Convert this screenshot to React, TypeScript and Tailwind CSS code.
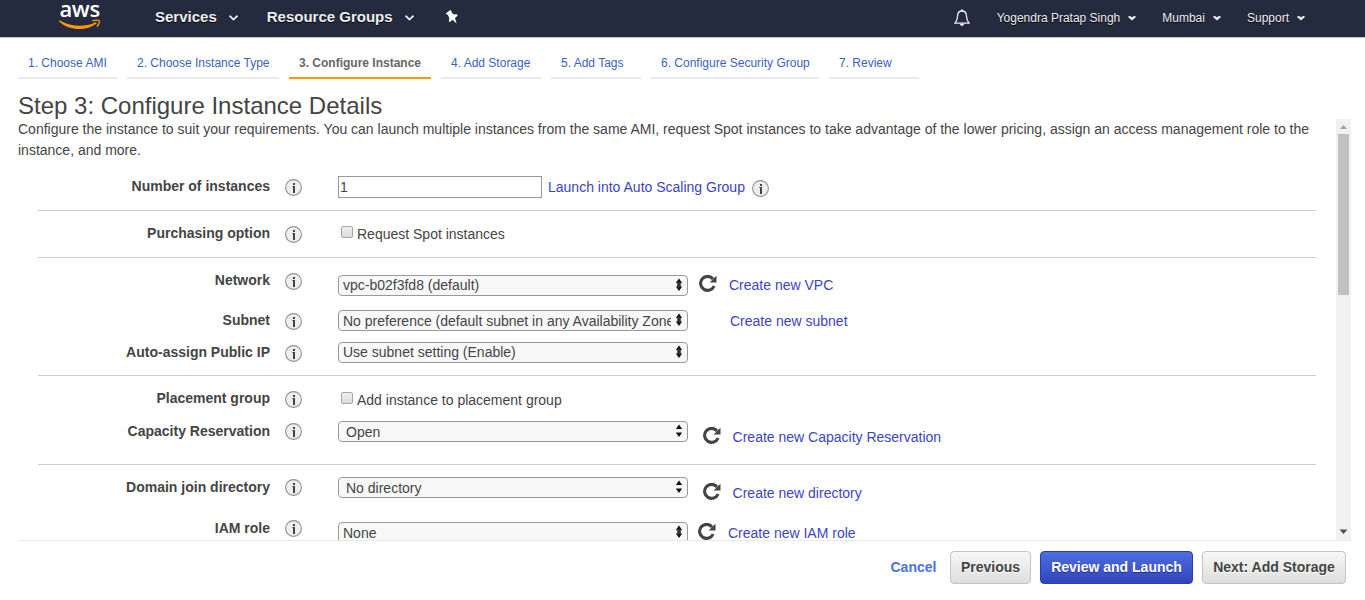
import React from "react";

type Tab = { label: string; width: string; active?: boolean };

const tabs: Tab[] = [
  { label: "1. Choose AMI", width: "w-[99px]" },
  { label: "2. Choose Instance Type", width: "w-[152px]" },
  { label: "3. Configure Instance", width: "w-[142px]", active: true },
  { label: "4. Add Storage", width: "w-[100px]" },
  { label: "5. Add Tags", width: "w-[90px]" },
  { label: "6. Configure Security Group", width: "w-[168px]" },
  { label: "7. Review", width: "w-[90px]" },
];

function Caret({ className = "" }: { className?: string }) {
  return (
    <svg viewBox="0 0 9 6" className={`h-1.5 w-[9px] ${className}`}>
      <path d="M0.5 0.7 L4.5 4.6 L8.5 0.7" fill="none" stroke="#eee" strokeWidth="1.8" />
    </svg>
  );
}

function SolidCaret({ className = "" }: { className?: string }) {
  return (
    <svg viewBox="0 0 8 5" className={`mt-px h-[5px] w-2 ${className}`}>
      <path d="M0.3 0.2 L2 0 L4 1.3 L6 0 L7.7 0.2 V1.2 L4 4.6 L0.3 1.2 Z" fill="#eee" />
    </svg>
  );
}

function AwsLogo() {
  return (
    <div className="ml-[58px] flex h-[37px] w-[44px] flex-col">
      <span className="block h-4 pl-[1.5px] font-['Open_Sans',sans-serif] text-[22px] leading-4 font-semibold tracking-[-0.4px] text-white [text-shadow:none]">
        aws
      </span>
      <svg viewBox="0 0 44 12" className="mt-0.5 h-3 w-[44px]">
        <path d="M1 2.8 C1.3 2.3 1.8 2.3 2.4 2.7 C13 9 27 9.2 37.2 4.5 C38.4 4 39.2 5 38.2 5.8 C28 13.5 11 12.6 1.4 3.7 Z" fill="#ff9900" />
        <path d="M34.4 2.9 C37 1.7 40.4 1.9 41.2 2.6 C41.9 3.4 40.9 6.8 38.8 8.6" fill="none" stroke="#ff9900" strokeWidth="1.3" />
      </svg>
    </div>
  );
}

function InfoIcon({ className = "" }: { className?: string }) {
  return (
    <svg viewBox="0 0 17 17" className={`size-[17px] shrink-0 ${className}`}>
      <circle cx="8.5" cy="8.5" r="7.9" fill="#eee" stroke="#929292" strokeWidth="1.1" />
      <rect x="8" y="4" width="2" height="2" fill="#444" />
      <rect x="8" y="7" width="2" height="7" fill="#444" />
      <rect x="7" y="7" width="1" height="1" fill="#888" />
    </svg>
  );
}

function Refresh({ className = "" }: { className?: string }) {
  return (
    <svg viewBox="0 0 18 18" className={`size-[18px] shrink-0 ${className}`}>
      <path d="M14 3.9 A7 7 0 1 0 15.1 11" fill="none" stroke="#444" strokeWidth="3.1" />
      <path d="M17.5 0.8 V7.6 H10.6 Z" fill="#444" />
    </svg>
  );
}

function Select({
  children,
  className = "",
  textClass = "pl-1",
  joined = true,
}: {
  children: string;
  className?: string;
  textClass?: string;
  joined?: boolean;
}) {
  return (
    <div
      className={`flex h-[21px] w-[350px] shrink-0 items-start rounded-[4px] border border-[#999] bg-[#f8f8f8] ${className}`}
    >
      <span className={`w-[332px] overflow-hidden leading-[19px] whitespace-nowrap ${textClass}`}>{children}</span>
      <svg viewBox="0 0 8 14" className="mt-[1.5px] ml-1 h-3.5 w-2">
        <path d="M0.8 5 L4 0.5 L7.2 5 Z M0.8 8.6 L4 13.1 L7.2 8.6 Z" fill="#111" />
        {joined && <path d="M2.2 4 H5.8 V9.5 H2.2 Z" fill="#333" />}
      </svg>
    </div>
  );
}

function Link({ children, className = "" }: { children: string; className?: string }) {
  return (
    <a href="#" className={`leading-5 whitespace-nowrap text-[#3b44c4] ${className}`}>
      {children}
    </a>
  );
}

function Check({ children, className = "" }: { children: string; className?: string }) {
  return (
    <label className={`flex items-start ${className}`}>
      <span className="mt-[3px] ml-[3px] size-3 rounded-[2px] border border-[#a5a5a5] bg-linear-to-b from-[#eee] to-[#dcdcdc]" />
      <span className="mt-px ml-1 leading-5">{children}</span>
    </label>
  );
}

function Row({
  label,
  height,
  icon = "mt-[3px]",
  children,
}: {
  label: string;
  height: string;
  icon?: string;
  children: React.ReactNode;
}) {
  return (
    <div className={`flex items-start ${height}`}>
      <span className="w-[232px] shrink-0 text-right leading-5 font-bold">{label}</span>
      <InfoIcon className={`mr-9 ml-[15px] ${icon}`} />
      {children}
    </div>
  );
}

function Group({ children }: { children: React.ReactNode }) {
  return <section className="ml-5 w-[1278px] border-b border-[#ccc] pt-3">{children}</section>;
}

const plainButton =
  "h-[33px] rounded-[4px] border border-[#c4c4c4] bg-linear-to-b from-[#f7f7f7] to-[#dedede] text-[#444] [text-shadow:0_1px_0_#fff]";

export default function App() {
  return (
    <div className="flex h-[600px] w-[1365px] flex-col overflow-hidden bg-white font-['Liberation_Sans',Arial,sans-serif] text-[14px] text-[#444]">
      <header className="flex h-[38px] shrink-0 items-start border-b border-[#c0c2c6] bg-[#252b3f] text-[#eee] [text-shadow:0_1px_0_#000]">
        <AwsLogo />
        <nav className="flex h-[34px] items-center text-[15px] font-bold">
          <span className="ml-[53px]">Services</span>
          <Caret className="mt-0.5 ml-[12px]" />
          <span className="ml-[29px]">Resource Groups</span>
          <Caret className="mt-0.5 ml-[12px]" />
          <svg viewBox="0 0 14 16" className="ml-[31px] h-4 w-3.5">
            <path
              d="M1 4.2 L5.4 1 L6.6 2.2 L6.4 3.2 L9 5.4 L11.6 5.2 L12.8 6.5 L10 9 L11.6 14.6 L7.6 10.7 L4.6 13.3 L3.8 11.8 L4.3 9.1 L2.8 5.8 L1.6 5.6 Z"
              fill="#fff"
            />
          </svg>
        </nav>
        <div className="ml-auto flex h-[35px] items-center text-[12px]">
          <svg viewBox="0 0 16 18" className="mr-[27px] h-[18px] w-4">
            <path
              d="M8 2 C5 2 3.7 4.2 3.6 6.8 C3.5 10.4 3 12 0.9 14.2 H15.1 C13 12 12.5 10.4 12.4 6.8 C12.3 4.2 11 2 8 2 Z"
              fill="none"
              stroke="#eee"
              strokeWidth="1.3"
            />
            <path d="M7 0.6 H9 V2 H7 Z M5.9 14.8 H10.1 C10 17.6 6 17.6 5.9 14.8 Z" fill="#eee" />
          </svg>
          <span>Yogendra Pratap Singh</span>
          <SolidCaret className="ml-2" />
          <span className="ml-[26px]">Mumbai</span>
          <SolidCaret className="ml-2" />
          <span className="ml-[26px]">Support</span>
          <SolidCaret className="mr-[60px] ml-2" />
        </div>
      </header>

      <nav className="ml-[18px] flex h-[41px] shrink-0 gap-2.5 text-[12px]">
        {tabs.map((tab) => (
          <a
            key={tab.label}
            href="#"
            className={`border-b-2 pt-4 pl-2.5 leading-[18px] whitespace-nowrap ${tab.width} ${
              tab.active ? "border-[#f90] font-bold text-[#666]" : "border-[#eaeaea] text-[#3b5fc0]"
            }`}
          >
            {tab.label}
          </a>
        ))}
      </nav>

      <h1 className="ml-[18px] h-10 shrink-0 pt-3 text-[24px] leading-[30px]">Step 3: Configure Instance Details</h1>

      <main className="mr-[14px] ml-[18px] flex h-[421px] shrink-0">
        <div className="h-[421px] w-[1318px] overflow-hidden">
          <p className="w-[1300px] leading-[21px]">
            Configure the instance to suit your requirements. You can launch multiple instances from the same AMI,
            request Spot instances to take advantage of the lower pricing, assign an access management role to the
            instance, and more.
          </p>
          <div className="mt-[3px]">
            <Group>
              <Row label="Number of instances" height="h-[34px]">
                <input
                  defaultValue="1"
                  className="h-[22px] w-[204px] border border-[#999] bg-white pl-px text-[14px] outline-none"
                />
                <Link className="mt-px ml-1.5">Launch into Auto Scaling Group</Link>
                <InfoIcon className="mt-1 ml-[7px]" />
              </Row>
            </Group>
            <Group>
              <Row label="Purchasing option" height="h-[34px]">
                <Check>Request Spot instances</Check>
              </Row>
            </Group>
            <Group>
              <Row label="Network" height="h-10">
                <Select className="mt-[5px]">vpc-b02f3fd8 (default)</Select>
                <Refresh className="mt-[5px] ml-[11px]" />
                <Link className="mt-[5px] ml-3">Create new VPC</Link>
              </Row>
              <Row label="Subnet" height="h-8">
                <Select textClass="pl-1 pt-px">No preference (default subnet in any Availability Zone)</Select>
                <Link className="mt-px ml-[42px]">Create new subnet</Link>
              </Row>
              <Row label="Auto-assign Public IP" height="h-[33px]">
                <Select>Use subnet setting (Enable)</Select>
              </Row>
            </Group>
            <Group>
              <Row label="Placement group" height="h-[33px]">
                <Check className="mt-px">Add instance to placement group</Check>
              </Row>
              <Row label="Capacity Reservation" height="h-[43px]" icon="mt-0.5">
                <Select textClass="pl-[7px] pt-px" joined={false}>
                  Open
                </Select>
                <Refresh className="mt-1.5 ml-[15px]" />
                <Link className="mt-1.5 ml-[11.6px]">Create new Capacity Reservation</Link>
              </Row>
            </Group>
            <Group>
              <Row label="Domain join directory" height="h-[41px]" icon="mt-0.5">
                <Select textClass="pl-[7px] pt-px" joined={false}>
                  No directory
                </Select>
                <Refresh className="mt-1.5 ml-[15px]" />
                <Link className="mt-1.5 ml-[11.6px]">Create new directory</Link>
              </Row>
              <Row label="IAM role" height="h-10" icon="mt-0.5">
                <Select className="mt-1" textClass="pl-1 pt-px">
                  None
                </Select>
                <Refresh className="mt-[5px] ml-2.5" />
                <Link className="mt-[5px] ml-3">Create new IAM role</Link>
              </Row>
            </Group>
          </div>
        </div>
        <div className="flex w-[15px] flex-col items-center bg-[#f1f1f1]">
          <svg viewBox="0 0 15 15" className="size-[15px] shrink-0">
            <path d="M4 10 L7.5 6 L11 10 Z" fill="#a3a3a3" />
          </svg>
          <div className="h-[161px] w-[11px] bg-[#c1c1c1]" />
          <svg viewBox="0 0 15 15" className="mt-auto size-[15px] shrink-0">
            <path d="M3.5 4.5 L7.5 9 L11.5 4.5 Z" fill="#505050" />
          </svg>
        </div>
      </main>

      <footer className="mr-[14px] ml-[18px] flex h-[60px] items-start justify-end border-t border-[#eaeaea] pt-2.5 pr-[5px] font-bold">
        <a href="#" className="mr-[13.6px] leading-8 text-[#4b70e2]">
          Cancel
        </a>
        <button className={`mr-[9px] w-[81px] ${plainButton}`}>Previous</button>
        <button className="mr-[9px] h-[33px] w-[153px] rounded-[4px] border border-[#2b3bb0] bg-linear-to-b from-[#4a70e0] to-[#3442bc] text-white [text-shadow:0_1px_0_#222e8c]">
          Review and Launch
        </button>
        <button className={`w-[144px] ${plainButton}`}>Next: Add Storage</button>
      </footer>
    </div>
  );
}
